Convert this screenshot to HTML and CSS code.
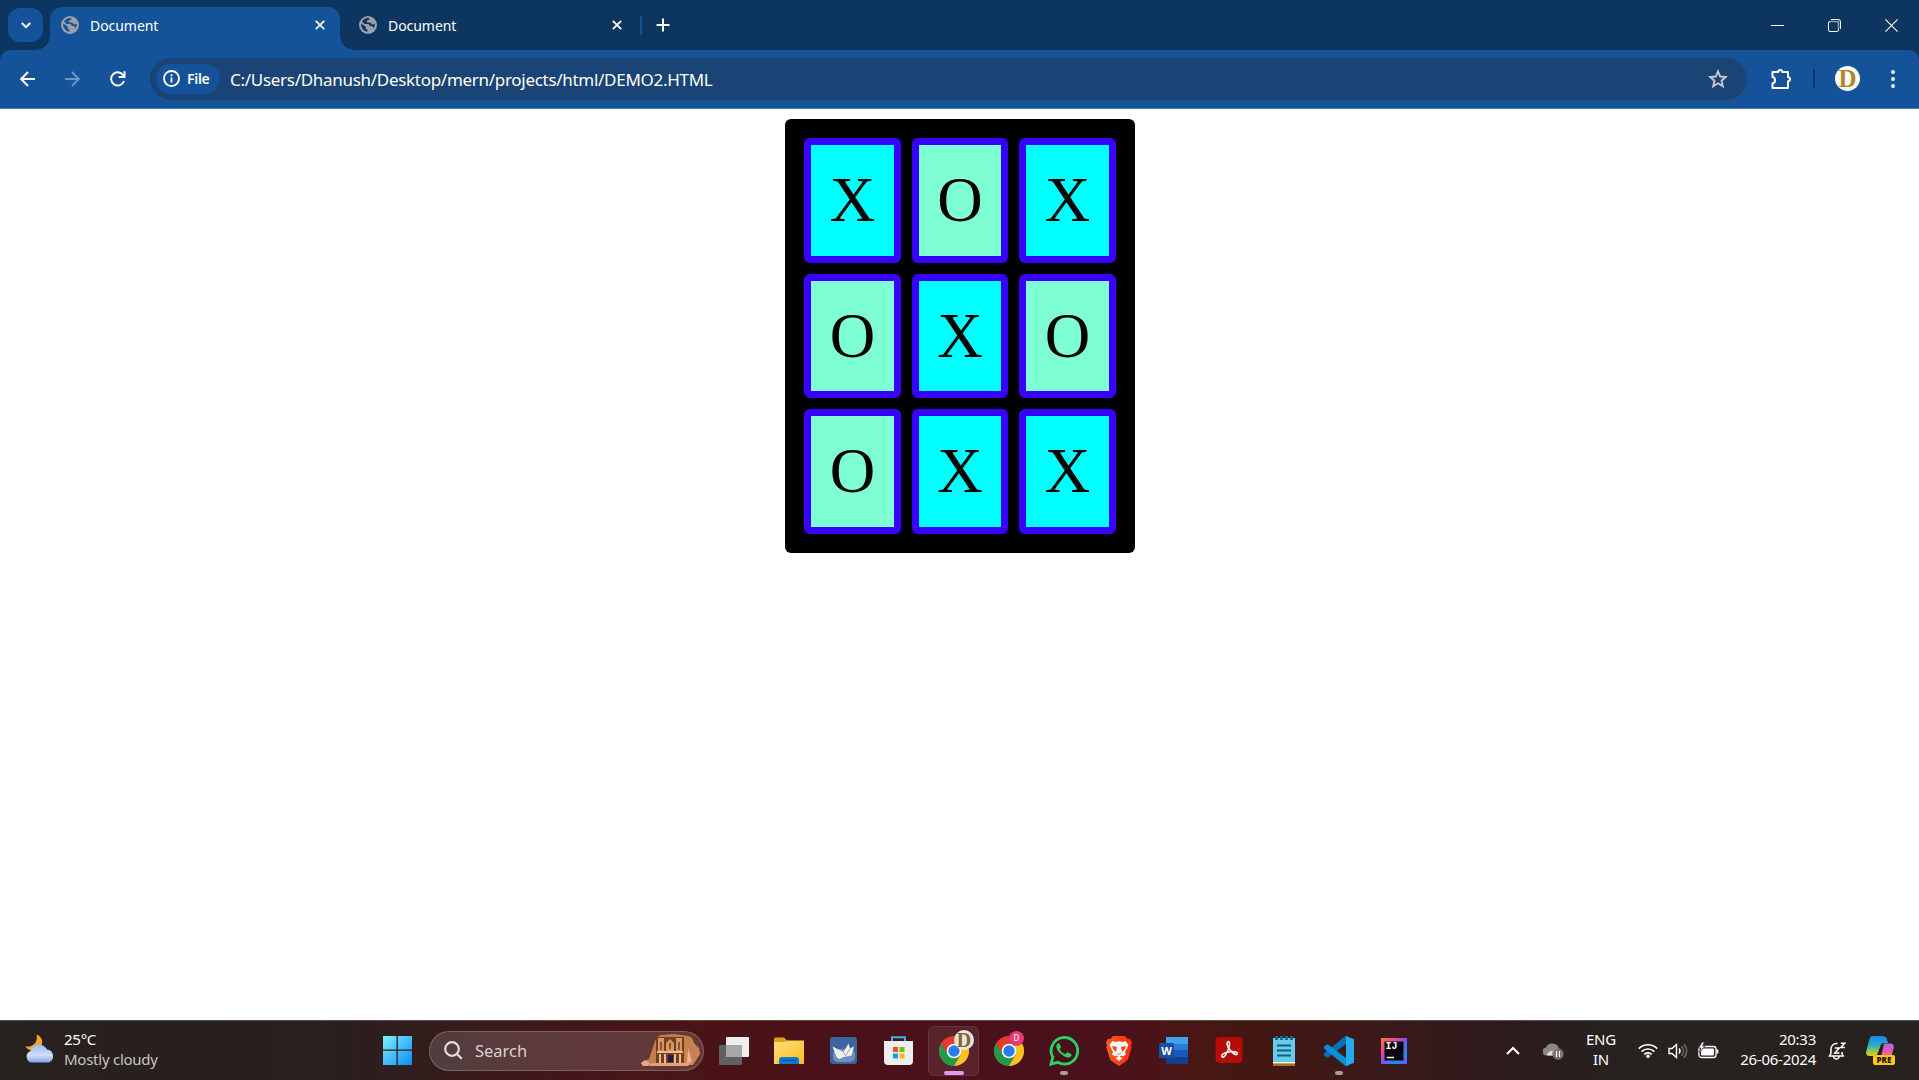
FILE: index.html
```html
<!DOCTYPE html>
<html lang="en">
<head>
<meta charset="utf-8">
<title>Document</title>
<link rel="stylesheet" href="styles.css">
</head>
<body>
<svg class="defs" width="0" height="0">
  <defs>
    <symbol id="globe" viewBox="0 0 18 18">
      <circle cx="9" cy="9" r="9" fill="#9aa0a6"/>
      <path class="land" d="M2 7.600c0 4.200 2.600 7.800 6.400 8.200v-2.300c-1.100 0-1.800-.8-1.800-1.800v-1.100zM10.300 2.200c-3-.5-5.900 1-7.300 3.300l2.600 2.500h3.300c1.700 0 1.700 1 1.700 2h1.800c1.300 0 1.700.8 1.700 2.300 1.700-1.300 2-3.300 1.800-5-1.300 1.700-3 1.400-3.600.1-.5-1-1.400-1-2.600-1H7.900c0-2 .6-2.600 2.400-2.600z"/>
    </symbol>
    <symbol id="close" viewBox="0 0 10 10"><path d="M.8.8l8.400 8.400M9.200.8L.8 9.200" stroke="#fff" stroke-width="1.800" fill="none"/></symbol>
    <symbol id="chrome" viewBox="0 0 30 30">
      <circle cx="15" cy="15" r="15" fill="#e33b2e"/>
      <path d="M2 7.500A15 15 0 0 0 15 30l6.500-11L15 15l-6.300 3.500z" fill="#229a48"/>
      <path d="M15 8h13.300A15 15 0 0 1 15 30l6.500-11z" fill="#fcc31e"/>
      <circle cx="15" cy="15" r="7.300" fill="#fff"/><circle cx="15" cy="15" r="5.700" fill="#2b7cf0"/>
    </symbol>
    <linearGradient id="win" x1="0" y1="0" x2="1" y2="1"><stop offset="0" stop-color="#7df0ff"/><stop offset="1" stop-color="#0a8df5"/></linearGradient>
    <linearGradient id="cloud" x1="0" y1="0" x2="0" y2="1"><stop offset="0" stop-color="#9dbcf2"/><stop offset=".6" stop-color="#cfdffa"/><stop offset="1" stop-color="#7da2e8"/></linearGradient>
    <linearGradient id="folder" x1="0" y1="0" x2="1" y2="1"><stop offset="0" stop-color="#ffe07a"/><stop offset="1" stop-color="#f9bd24"/></linearGradient>
    <linearGradient id="rock" x1="0" y1="0" x2="1" y2="1"><stop offset="0" stop-color="#bd7b49"/><stop offset="1" stop-color="#c98553"/></linearGradient>
    <linearGradient id="ij" x1="0" y1="0" x2="1" y2="1"><stop offset="0" stop-color="#fc801d"/><stop offset=".3" stop-color="#f0459a"/><stop offset=".5" stop-color="#7a55f0"/><stop offset=".75" stop-color="#1c8cf5"/><stop offset="1" stop-color="#6b57ff"/></linearGradient>
    <linearGradient id="brave" x1="0" y1="0" x2="1" y2="0"><stop offset="0" stop-color="#ff5a1f"/><stop offset="1" stop-color="#ff2a0a"/></linearGradient>
    <linearGradient id="cpl" x1="0" y1="0" x2="0" y2="1"><stop offset="0" stop-color="#1487e8"/><stop offset=".5" stop-color="#30b0c8"/><stop offset=".75" stop-color="#8bcb48"/><stop offset="1" stop-color="#f3c522"/></linearGradient>
    <linearGradient id="cpr" x1="0" y1="0" x2="0" y2="1"><stop offset="0" stop-color="#a66ae8"/><stop offset=".5" stop-color="#e55ca5"/><stop offset="1" stop-color="#fb9360"/></linearGradient>
  </defs>
</svg>

<header class="tabstrip">
  <button class="tab-search"><svg width="10" height="7" viewBox="0 0 10 7"><path d="M.8 1l4.200 4.200L9.200 1" fill="none" stroke="#fff" stroke-width="2"/></svg></button>
  <div class="tab active"><svg class="favicon" width="18" height="18"><use href="#globe"/></svg><span class="title">Document</span><svg width="10" height="10"><use href="#close"/></svg></div>
  <div class="tab"><svg class="favicon" width="18" height="18"><use href="#globe"/></svg><span class="title">Document</span><svg width="10" height="10"><use href="#close"/></svg></div>
  <i class="tab-divider"></i>
  <svg class="new-tab" width="14" height="14" viewBox="0 0 14 14"><path d="M7 .5v13M.5 7h13" stroke="#fff" stroke-width="2"/></svg>
  <div class="window-controls">
    <svg width="13" height="13" viewBox="0 0 13 13"><path d="M0 6.500h13" stroke="#fff"/></svg>
    <svg width="13" height="13" viewBox="0 0 13 13" fill="none" stroke="#fff"><path d="M3 .5h7.500a2 2 0 0 1 2 2V10"/><rect x=".5" y="2.500" width="10" height="10" rx="1.500"/><path d="M2 2.500h8.500v8" stroke="#8ba0b8" stroke-width="1.500"/></svg>
    <svg width="13" height="13" viewBox="0 0 13 13"><path d="M.4.4l12.200 12.200M12.600.4L.4 12.600" stroke="#fff" stroke-width="1.100"/></svg>
  </div>
</header>

<nav class="toolbar">
  <svg class="back" width="16" height="16" viewBox="0 0 16 16" fill="none" stroke="#fff" stroke-width="2"><path d="M15 8H1.500M8 1L1.200 8 8 15"/></svg>
  <svg class="forward" width="16" height="16" viewBox="0 0 16 16" fill="none" stroke="#6f94c4" stroke-width="2"><path d="M0 8h13.500M7 1l6.800 7L7 15"/></svg>
  <svg class="reload" width="16" height="16" viewBox="0 0 16 16" fill="none" stroke="#fff" stroke-width="2"><path d="M14 10A6.600 6.600 0 1 1 13.200 4.200L14.500 6M14.500.3V6H8.700"/></svg>
  <div class="omnibox">
    <span class="chip"><svg width="17" height="17" viewBox="0 0 17 17"><circle cx="8.500" cy="8.500" r="7.500" fill="none" stroke="#fff" stroke-width="1.900"/><path d="M8.500 7.500v5M8.500 4.200v2" stroke="#fff" stroke-width="1.800"/></svg><b>File</b></span>
    <span class="url">C:/Users/Dhanush/Desktop/mern/projects/html/DEMO2.HTML</span>
    <svg class="star" width="20" height="20" viewBox="0 0 20 20"><path d="M10 2.300l2.200 5.200 5.600.5-4.200 3.700 1.200 5.500-4.800-2.900-4.800 2.900 1.200-5.500L2.200 8l5.600-.5z" fill="none" stroke="#c9c9cb" stroke-width="1.900"/></svg>
  </div>
  <svg class="puzzle" width="22" height="22" viewBox="0 0 22 22"><path d="M2.500 4h5.800c0-2.700 3.900-2.700 3.900 0h5.800v5.300c2.700 0 2.700 3.900 0 3.900V20H2.500v-4.700c3.300-.3 3.300-6 0-6.300z" fill="none" stroke="#fff" stroke-width="2" stroke-linejoin="round"/></svg>
  <i class="tool-divider"></i>
  <span class="avatar">D</span>
  <svg class="menu" width="4" height="18" viewBox="0 0 4 18" fill="#fff"><circle cx="2" cy="2" r="1.900"/><circle cx="2" cy="9" r="1.900"/><circle cx="2" cy="16" r="1.900"/></svg>
</nav>

<main class="page">
  <div class="board">
    <div class="cell x">X</div><div class="cell o">O</div><div class="cell x">X</div>
    <div class="cell o">O</div><div class="cell x">X</div><div class="cell o">O</div>
    <div class="cell o">O</div><div class="cell x">X</div><div class="cell x">X</div>
  </div>
</main>

<footer class="taskbar">
  <div class="weather">
    <svg width="30" height="30" viewBox="0 0 30 30"><path d="M11.500.5c6 2 7.500 9 3.500 13S4 18 .3 12.500C8 13.500 13.500 8 11.500.5z" fill="#f5a623"/><path d="M6.500 28.500a6 6 0 0 1-1-11.500 9 9 0 0 1 16.500-1.500 6.700 6.700 0 0 1 1.500 13z" fill="url(#cloud)"/></svg>
    <div class="weather-text"><span>25°C</span><span class="dim">Mostly cloudy</span></div>
  </div>
  <div class="apps">
    <span class="app"><svg width="29" height="29" viewBox="0 0 29 29" fill="url(#win)"><path d="M0 0h29v29H0z"/><path d="M13.500 0h1.300v29h-1.300zM0 13.500h29v1.300H0z" fill="#321a1a"/></svg></span>
    <div class="search">
      <svg class="lens" width="19" height="19" viewBox="0 0 19 19" fill="none" stroke="#e4dede" stroke-width="2.200"><circle cx="8" cy="8" r="6.800"/><path d="M12.800 12.800l5 5"/></svg>
      <span>Search</span>
      <svg class="petra" width="60" height="33" viewBox="0 0 60 33">
        <path d="M1 29l8-4 5-15q2-8 7-9l14-1 13 2q5 1 6 7l5 5 1 6-7 11H3z" fill="url(#rock)"/>
        <path d="M16 3h28v27H16z" fill="#70401f"/>
        <path d="M18 4h6v13h-6zM36 4h6v13h-6zM26 9l4-4 4 4v8h-8z" fill="#d99462"/>
        <path d="M20 8h2v8h-2zM38 8h2v8h-2zM29 9h2v6h-2z" fill="#8d5232"/>
        <path d="M17 17h26v2H17zM19 20h2v10h-2zM24 20h2v10h-2zM34 20h2v10h-2zM39 20h2v10h-2z" fill="#f2b98c"/>
        <path d="M28 21h5v7h-5z" fill="#20184f"/><path d="M12 29h37l3-2-4 5H8z" fill="#e5a273"/><path d="M48 14l4 14-5 1z" fill="#efb39d"/>
        <path d="M1 29l4-3 5 3-2 3H3z" fill="#e9a591"/>
      </svg>
    </div>
    <span class="app first"><svg width="30" height="28" viewBox="0 0 30 28"><rect y="8" width="23" height="20" rx="1" fill="#606060"/><rect x="7" width="23" height="20" rx="1" fill="#eee"/><path d="M7 8h16v12H8l-1-1z" fill="#a8a8a8"/></svg></span>
    <span class="app"><svg width="30" height="28" viewBox="0 0 30 28"><path d="M0 2a1.500 1.500 0 0 1 1.500-1.500H10l3 3V12H0z" fill="#e0a010"/><path d="M0 5h11l2-1.500h17V27H0z" fill="url(#folder)"/><path d="M5 27v-4a3 3 0 0 1 3-3h14a3 3 0 0 1 3 3v4z" fill="#0f78d0"/><path d="M8 23.500h14" stroke="#064b91"/></svg></span>
    <span class="app"><svg width="27" height="27" viewBox="0 0 27 27"><rect width="27" height="27" rx="3" fill="#3b659e"/><rect x="3" y="12" width="22" height="13" rx="5" fill="#6d91bf"/><path d="M2.500 9.500l11 5.500 5-8.500 1.500 5 4-2-2.500 9-8 1.500-4 2-3-2z" fill="#f3f1ed"/><path d="M13.500 15l2 4 4.500-7.500" fill="none" stroke="#aaa"/></svg></span>
    <span class="app"><svg width="29" height="30" viewBox="0 0 29 30"><path d="M8 6V1.200h13V6" fill="none" stroke="#35b7ef" stroke-width="2"/><path d="M0 5h29v20a4 4 0 0 1-4 4H4a4 4 0 0 1-4-4z" fill="#eee"/><path d="M9 11h5v5H9z" fill="#f25022"/><path d="M15.500 11h5v5h-5z" fill="#7fba00"/><path d="M9 17.500h5v5H9z" fill="#00a4ef"/><path d="M15.500 17.500h5v5h-5z" fill="#ffb900"/></svg></span>
    <span class="app current"><svg width="30" height="30"><use href="#chrome"/></svg><span class="badge-gold">D</span></span>
    <span class="app"><svg width="30" height="30"><use href="#chrome"/></svg><span class="badge-pink">D</span></span>
    <span class="app running"><svg width="30" height="30" viewBox="0 0 30 30"><path d="M1.900 28.100l1.900-6.800A13.300 13.300 0 1 1 8.700 26.300z" fill="none" stroke="#25d366" stroke-width="2.800"/><path d="M10.500 7.700c-.4-.7-1.500-.6-2.200.2-2 2.400-.6 5.800 2.700 9.200 3.500 3.500 7.200 5.400 9.800 4.100 1.600-.8 2-2.300 1.600-3l-3.600-1.900c-.6-.2-1 .4-1.900 1.500-.4.500-.9.300-1.500 0-2-.9-3.500-2.300-4.600-4.300-.3-.6.2-.9.700-1.500.5-.7.600-.9.300-1.600z" fill="#25d366"/></svg></span>
    <span class="app"><svg width="26" height="30" viewBox="0 0 26 30"><path d="M7 0h12l2.500 3L24 2.800l2 3.700-1 3 .7 2-4 12.500L13 30 4.300 24 .3 11.500l.7-2-1-3 2-3.700 2.500.2z" fill="url(#brave)"/><path d="M3.500 9l3-4 3 1 3.500-.8 3.500.8 3-1 3 4-3.500 7 1 2.500-3 2-1.500-1-2.500 1.500L10.500 19.500l-1.500 1-3-2 1-2.500z" fill="#fff"/><path d="M6 10l5 1-1 5-3-3zM20 10l-5 1 1 5 3-3zM10 17l3 1 3-1-3 2z" fill="#fb4418"/><path d="M9.500 22.300L13 20.200l3.500 2.100L13 25z" fill="#fff"/></svg></span>
    <span class="app"><span class="word"><b>W</b></span></span>
    <span class="app"><svg width="28" height="27" viewBox="0 0 28 27"><rect width="27" height="26" x=".5" rx="4" fill="#b60c03"/><path d="M7.500 20c-3-2 2.500-4.500 7.500-5.200s8 .4 7.200 2.200-5.200-.8-8.200-5.300-2-7.200-.7-7.200c2.300 0 .9 6.500-1.300 10.800S8.500 20.700 7.500 20z" fill="none" stroke="#fff" stroke-width="1.600"/></svg></span>
    <span class="app"><svg width="22" height="30" viewBox="0 0 22 30"><path d="M0 2h22v27H0z" fill="#68cbe8"/><path d="M0 26h22v1.500H0z" fill="#fff"/><path d="M0 27.500h22V30H0z" fill="#b56c17"/><path d="M4 9.500h14M4 14.500h14M4 19.500h14" stroke="#0d5f7f" stroke-width="2"/><path d="M3.500 0v4M8.500 0v4M13.500 0v4M18.500 0v4" stroke="#0c6c91" stroke-width="3"/></svg></span>
    <span class="app running"><svg width="30" height="30" viewBox="0 0 30 30"><path d="M22 8L3.500 22 0 19.500v-2L21.500 0l3 1z" fill="#0072b8"/><path d="M22 22L3.500 8 0 10.500v2L21.500 30l3-1z" fill="#0b8dd8"/><path d="M22 0l8 3.200v23.600L22 30z" fill="#27a9f1"/></svg></span>
    <span class="app"><span class="ij"><svg width="26" height="26" viewBox="0 0 26 26"><path d="M0 0h26v26H0z" fill="url(#ij)"/><path d="M3.500 3.500h19v19h-19z" fill="#08050d"/><path d="M6 19.500h7" stroke="#fff" stroke-width="1.500"/></svg><b>IJ</b></span></span>
  </div>
  <div class="tray">
    <svg width="14" height="9" viewBox="0 0 14 9"><path d="M1 8l6-6 6 6" fill="none" stroke="#fff" stroke-width="2"/></svg>
    <svg class="onedrive" width="21" height="18" viewBox="0 0 21 18"><path d="M4 13.500a4 4 0 0 1-1-8A7 7 0 0 1 15.500 5l2 8.500z" fill="#898786"/><path d="M4 13.500c0-3 3-5 6-4.500 3-5 8-2 8 3l-5 1.500z" fill="#ddd"/><circle cx="15" cy="12" r="5.700" fill="#74716f"/><path d="M13.500 9v6M16.500 9v6" stroke="#fff" stroke-width="1.200"/></svg>
    <div class="lang"><span>ENG</span><span>IN</span></div>
    <svg class="wifi" width="20" height="15" viewBox="0 0 20 15" fill="none" stroke="#fff" stroke-width="1.600"><path d="M.8 5.600a13 13 0 0 1 18.400 0M3.600 8.600a9 9 0 0 1 12.800 0M6.300 11.400a5.200 5.200 0 0 1 7.400 0"/><circle cx="10" cy="13.300" r="1" fill="#fff"/></svg>
    <svg class="speaker" width="20" height="16" viewBox="0 0 20 16" fill="none" stroke="#fff" stroke-width="1.400"><path d="M1 5.500h3l4.500-4v13l-4.500-4H1z"/><path d="M11 5.500c1.300 1.500 1.300 3.500 0 5"/><path d="M13.500 3.200c2.500 2.800 2.500 6.800 0 9.600M16 1.200c3.600 3.800 3.600 9.800 0 13.600" stroke="#77716e"/></svg>
    <svg class="battery" width="21" height="17" viewBox="0 0 21 17"><rect x="1" y="4.500" width="17" height="11" rx="2.500" fill="none" stroke="#fff" stroke-width="1.300"/><rect x="3" y="6.500" width="13" height="7" rx="1" fill="#fff"/><path d="M18.500 7.500h1.800v4h-1.800z" fill="#fff"/><path d="M4 0L.5 6H3L1.500 10.500 7 4H4.500L6.500 0z" fill="#fff" stroke="#27211f" stroke-width=".7"/></svg>
    <div class="clock"><span>20:33</span><span>26-06-2024</span></div>
    <svg class="bell" width="18" height="18" viewBox="0 0 18 18" fill="none" stroke="#fff" stroke-width="1.500"><path d="M9.500 1.500C5.500 1 3 4 3 7v4l-1.500 3h13.700L14 11.500V10M5.500 14.500c.5 3.300 5.200 3.300 5.700 0M6.800 6h4.500l-4.500 5h4.700M12.800 1.200h4l-4 4.300h4"/></svg>
    <div class="copilot"><svg width="28" height="25" viewBox="0 0 28 25"><path d="M6.500 0h10.800a4 4 0 0 1 3.500 3L22 7h-4c-2 0-3 1-3.600 3l-2.600 7c-.7 2-2 3-4 3H3.500C.5 20-.5 18 .3 15L3.500 3C4 1 5 0 6.500 0z" fill="url(#cpl)"/><path d="M18 7.500h6.500c2.800 0 3.800 2 3.200 4.500L25.500 20c-.6 2-2 4-4 4H11c3 0 3.800-2.500 4.300-4.500z" fill="url(#cpr)"/></svg><b>PRE</b></div>
  </div>
</footer>
</body>
</html>
```
FILE: styles.css
```css
* { box-sizing: border-box; }
body {
  margin: 0;
  height: 1080px;
  display: flex;
  flex-direction: column;
  overflow: hidden;
  background: #fff;
  color: #fff;
  font-family: "Noto Sans", "Open Sans", sans-serif;
}
svg { display: block; flex: none; }
.defs { position: absolute; }

/* Tab strip */
.tabstrip {
  height: 50px;
  flex: none;
  display: flex;
  align-items: center;
  padding-left: 8px;
  background: #0c3560;
}
.tab-search {
  width: 35px;
  height: 34px;
  padding: 0;
  border: 0;
  border-radius: 12px;
  background: #14539a;
  display: flex;
  align-items: center;
  justify-content: center;
}
.tab {
  --land: #0c3560;
  position: relative;
  width: 297px;
  height: 43px;
  margin-top: 7px;
  padding: 0 15px 7px 19px;
  display: flex;
  align-items: center;
  font-size: 14px;
}
.tab.active {
  --land: #14539a;
  width: 290px;
  margin-left: 7px;
  padding-left: 11px;
  background: #14539a;
  border-radius: 12px 12px 0 0;
}
.tab.active::before,
.tab.active::after {
  content: "";
  position: absolute;
  bottom: 0;
  width: 14px;
  height: 14px;
}
.tab.active::before { left: -14px; background: radial-gradient(circle at 0 0, transparent 13.5px, #14539a 14px); }
.tab.active::after { right: -14px; background: radial-gradient(circle at 100% 0, transparent 13.5px, #14539a 14px); }
.land { fill: var(--land); }
.title { flex: 1; margin-left: 11px; letter-spacing: -0.05px; }
.tab-divider { width: 2px; height: 19px; margin-left: 3px; background: #14539a; }
.new-tab { margin-left: 14px; }
.window-controls { margin-left: auto; margin-right: 21px; display: flex; gap: 44px; }

/* Toolbar */
.toolbar {
  height: 59px;
  flex: none;
  display: flex;
  align-items: center;
  padding: 0 24px 1px 20px;
  background:
    radial-gradient(circle at 100% 100%, #14539a 9.5px, #0c3560 10px) 0 0 / 10px 10px no-repeat,
    radial-gradient(circle at 0 100%, #14539a 9.5px, #0c3560 10px) 100% 0 / 10px 10px no-repeat,
    #14539a;
  border-bottom: 1px solid #4478b3;
}
.forward { margin-left: 29px; }
.reload { margin-left: 29px; }
.omnibox {
  width: 1597px;
  height: 42px;
  margin-left: 24px;
  padding: 0 19px 0 6px;
  display: flex;
  align-items: center;
  border-radius: 21px;
  background: #194475;
}
.chip {
  width: 64px;
  height: 30px;
  padding-left: 7px;
  display: flex;
  align-items: center;
  gap: 7px;
  border-radius: 15px;
  background: #14539a;
  font-size: 14px;
  letter-spacing: -0.3px;
}
.chip b { font-weight: 600; }
.url { margin: 1px 0 0 10px; font-size: 17px; letter-spacing: -0.29px; white-space: nowrap; }
.star { margin-left: auto; }
.puzzle { margin-left: 23px; }
.tool-divider { width: 2px; height: 19px; margin-left: 21px; background: #0c3560; }
.avatar {
  width: 25px;
  height: 25px;
  margin-left: 20px;
  border-radius: 50%;
  background: #fff;
  color: #b58426;
  font: bold 25px/25px "Liberation Serif", serif;
  text-align: center;
}
.menu { margin-left: auto; }

/* Game board */
.page { flex: 1; padding-top: 10px; background: #fff; }
.board {
  width: 350px;
  height: 434px;
  margin: 0 auto;
  padding: 19px;
  display: grid;
  grid-template-columns: 97px 96px 97px;
  grid-template-rows: 125px 124px 125px;
  gap: 11px;
  border-radius: 6px;
  background: #000;
}
.cell {
  display: flex;
  align-items: center;
  justify-content: center;
  padding-left: 1px;
  border: 7px solid #3700ff;
  border-radius: 6px;
  color: #000;
  font: 63px/1 "Liberation Serif", serif;
}
.cell.x { background: #0ff; }
.cell.o { background: #7fffd4; }

/* Taskbar */
.taskbar {
  height: 60px;
  flex: none;
  display: flex;
  align-items: center;
  border-top: 1px solid #57504c;
  background: linear-gradient(90deg, #27211f 0, #29201f 330px, #42171a 560px, #4a1416 710px, #4a1119 850px, #4a111c 1100px, #481614 1190px, #401814 1300px, #371a1c 1420px, #2d1c1c 1510px, #27211f 1600px);
}
.weather { width: 370px; padding: 0 0 3px 25px; display: flex; align-items: center; gap: 9px; }
.weather-text, .lang, .clock { display: flex; flex-direction: column; font-size: 15px; line-height: 20px; letter-spacing: -0.25px; white-space: nowrap; }
.lang, .clock { padding-bottom: 3px; }
.dim { color: #c8c4c2; }
.apps { display: flex; align-items: center; }
.app {
  position: relative;
  width: 55px;
  height: 50px;
  display: flex;
  align-items: center;
  justify-content: center;
}
.app.first { margin-left: 2px; }
.search {
  width: 275px;
  height: 40px;
  margin-left: 4px;
  padding: 0 3px 0 14px;
  display: flex;
  align-items: center;
  gap: 12px;
  border: 1px solid rgba(255, 255, 255, .2);
  border-radius: 20px;
  background: rgba(255, 255, 255, .15);
  color: #d9d1d1;
  font-size: 16.5px;
}
.petra { margin-left: auto; }
.current::before {
  content: "";
  position: absolute;
  inset: 0 2px;
  border: 1px solid rgba(255, 255, 255, .08);
  border-radius: 6px;
  background: rgba(255, 255, 255, .08);
}
.current svg { position: relative; }
.current::after, .running::after {
  content: "";
  position: absolute;
  bottom: 1px;
  width: 8px;
  height: 4px;
  border-radius: 2px;
  background: #a99b9c;
}
.current::after { width: 20px; background: #dc9ee8; }
.badge-gold, .badge-pink { position: absolute; border-radius: 50%; text-align: center; }
.badge-gold { left: 28px; top: 4px; width: 20px; height: 20px; background: #e9e5dd; color: #84642c; font: bold 20px/20px "Liberation Serif", serif; }
.badge-pink { left: 28px; top: 5px; width: 15px; height: 15px; background: #e63b76; color: #fff; font: 9px/15px Roboto, sans-serif; }
.word {
  width: 29px;
  height: 27px;
  display: flex;
  align-items: center;
  background: linear-gradient(#41a5ee 25%, #2b7cd3 25% 50%, #185abd 50% 75%, #103f91 75%) 7px 0 / 22px 27px no-repeat;
}
.word b { width: 15px; height: 15px; border-radius: 1px; background: #174fa5; font: bold 11px/15px "Open Sans", sans-serif; text-align: center; }
.ij { position: relative; }
.ij b { position: absolute; left: 5px; top: 3px; font: bold 10px/12px "Liberation Mono", monospace; }
.tray { margin-left: auto; margin-right: 24px; display: flex; align-items: center; }
.onedrive { margin-left: 23px; }
.lang { width: 40px; margin-left: 17px; align-items: center; }
.wifi { margin-left: 17px; }
.speaker { margin-left: 10px; }
.battery { margin-left: 10px; }
.clock { width: 97px; align-items: flex-end; }
.bell { margin-left: 12px; }
.copilot { position: relative; width: 29px; height: 29px; margin-left: 20px; }
.copilot b {
  position: absolute;
  left: 7px;
  top: 19px;
  width: 22px;
  height: 10px;
  border-radius: 2px;
  background: #ffc81a;
  color: #221a08;
  font: 800 8px/10px "Open Sans", sans-serif;
  text-align: center;
}
```
